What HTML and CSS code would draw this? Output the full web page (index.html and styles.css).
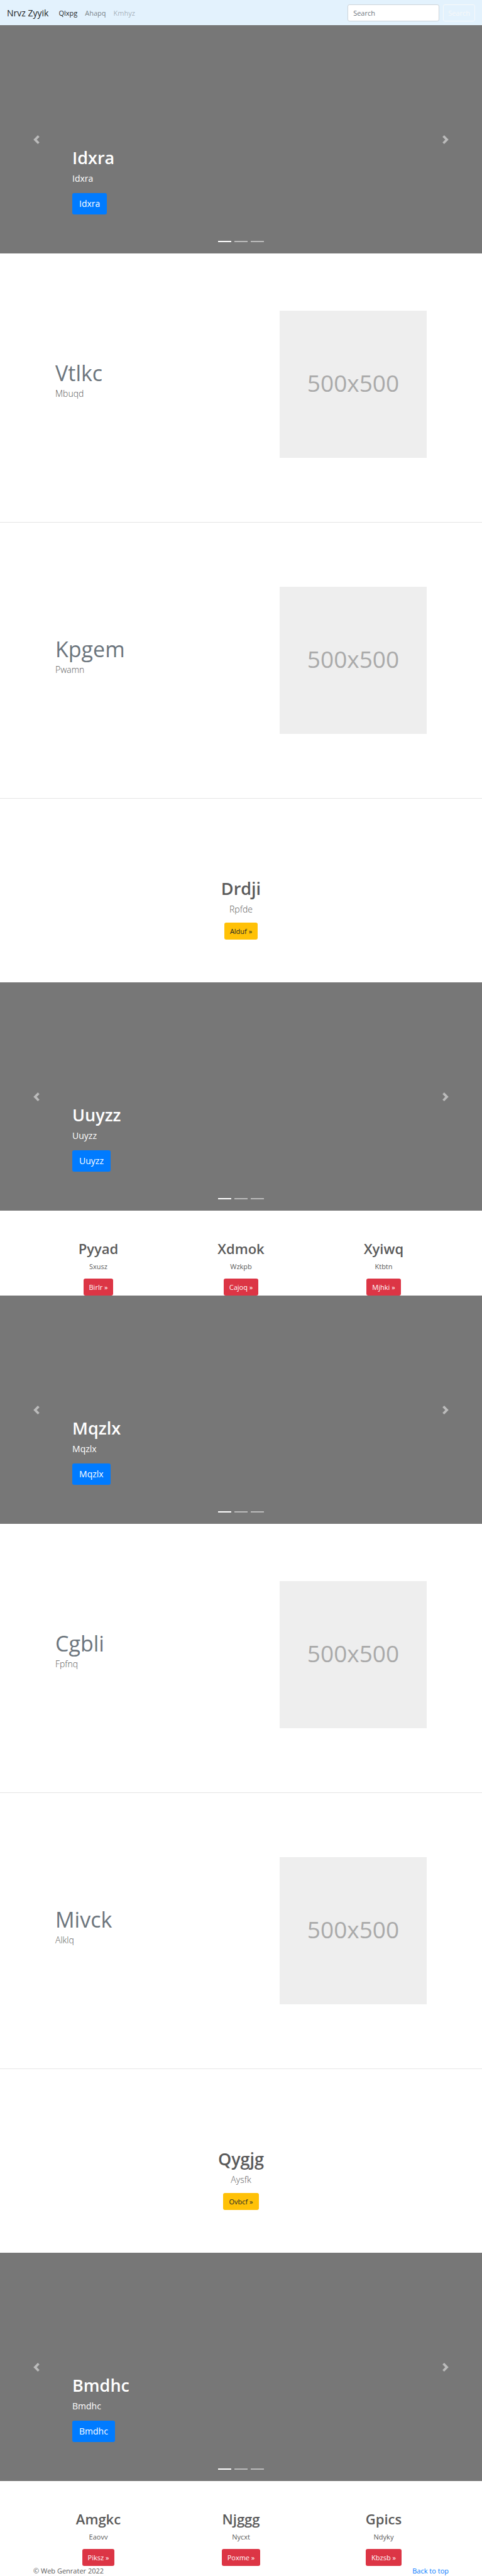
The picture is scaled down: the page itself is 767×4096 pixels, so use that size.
FILE: index.html
```html
<!DOCTYPE html>
<html lang="en">
<head>
<meta charset="utf-8">
<meta name="viewport" content="width=device-width, initial-scale=1">
<title>Nrvz Zyyik</title>
<link rel="stylesheet" href="styles.css">
</head>
<body>
<svg class="defs" aria-hidden="true">
  <symbol id="prev" viewBox="0 0 8 8"><path d="M5.25 0l-4 4 4 4 1.5-1.5L4.25 4l2.5-2.5L5.25 0z"/></symbol>
  <symbol id="next" viewBox="0 0 8 8"><path d="M2.75 0l-1.5 1.5L3.75 4l-2.5 2.5L2.75 8l4-4-4-4z"/></symbol>
</svg>

<header class="navbar" id="top">
  <a class="brand" href="#">Nrvz Zyyik</a>
  <nav class="nav">
    <a class="nav-link active" href="#">Qlxpg</a>
    <a class="nav-link" href="#">Ahapq</a>
    <a class="nav-link disabled" href="#">Kmhyz</a>
  </nav>
  <form class="search">
    <input class="search-input" type="search" placeholder="Search" aria-label="Search">
    <button class="btn btn-outline" type="button">Search</button>
  </form>
</header>

<main>
  <section class="carousel">
    <div class="caption">
      <h1 class="title">Idxra</h1>
      <p class="text">Idxra</p>
      <a class="btn btn-lg btn-primary" href="#">Idxra</a>
    </div>
    <button class="control prev" type="button" aria-label="Previous"><svg class="arrow"><use href="#prev"/></svg></button>
    <button class="control next" type="button" aria-label="Next"><svg class="arrow"><use href="#next"/></svg></button>
    <div class="indicators"><span class="bar on"></span><span class="bar"></span><span class="bar"></span></div>
  </section>

  <section class="featurette first">
    <div class="featurette-text">
      <h2 class="display">Vtlkc</h2>
      <p class="lead">Mbuqd</p>
    </div>
    <div class="placeholder">500x500</div>
  </section>
  <hr class="divider">
  <section class="featurette">
    <div class="featurette-text">
      <h2 class="display">Kpgem</h2>
      <p class="lead">Pwamn</p>
    </div>
    <div class="placeholder">500x500</div>
  </section>
  <hr class="divider">

  <section class="banner">
    <h1 class="title">Drdji</h1>
    <p class="lead large">Rpfde</p>
    <a class="btn btn-warning" href="#">Alduf »</a>
  </section>

  <section class="carousel">
    <div class="caption">
      <h1 class="title">Uuyzz</h1>
      <p class="text">Uuyzz</p>
      <a class="btn btn-lg btn-primary" href="#">Uuyzz</a>
    </div>
    <button class="control prev" type="button" aria-label="Previous"><svg class="arrow"><use href="#prev"/></svg></button>
    <button class="control next" type="button" aria-label="Next"><svg class="arrow"><use href="#next"/></svg></button>
    <div class="indicators"><span class="bar on"></span><span class="bar"></span><span class="bar"></span></div>
  </section>

  <section class="columns">
    <div class="column"><h2 class="subtitle">Pyyad</h2><p class="note">Sxusz</p><a class="btn btn-danger" href="#">Birlr »</a></div>
    <div class="column"><h2 class="subtitle">Xdmok</h2><p class="note">Wzkpb</p><a class="btn btn-danger" href="#">Cajoq »</a></div>
    <div class="column"><h2 class="subtitle">Xyiwq</h2><p class="note">Ktbtn</p><a class="btn btn-danger" href="#">Mjhki »</a></div>
  </section>

  <section class="carousel">
    <div class="caption">
      <h1 class="title">Mqzlx</h1>
      <p class="text">Mqzlx</p>
      <a class="btn btn-lg btn-primary" href="#">Mqzlx</a>
    </div>
    <button class="control prev" type="button" aria-label="Previous"><svg class="arrow"><use href="#prev"/></svg></button>
    <button class="control next" type="button" aria-label="Next"><svg class="arrow"><use href="#next"/></svg></button>
    <div class="indicators"><span class="bar on"></span><span class="bar"></span><span class="bar"></span></div>
  </section>

  <section class="featurette first">
    <div class="featurette-text">
      <h2 class="display">Cgbli</h2>
      <p class="lead">Fpfnq</p>
    </div>
    <div class="placeholder">500x500</div>
  </section>
  <hr class="divider">
  <section class="featurette">
    <div class="featurette-text">
      <h2 class="display">Mivck</h2>
      <p class="lead">Alklq</p>
    </div>
    <div class="placeholder">500x500</div>
  </section>
  <hr class="divider">

  <section class="banner">
    <h1 class="title">Qygjg</h1>
    <p class="lead large">Aysfk</p>
    <a class="btn btn-warning" href="#">Ovbcf »</a>
  </section>

  <section class="carousel">
    <div class="caption">
      <h1 class="title">Bmdhc</h1>
      <p class="text">Bmdhc</p>
      <a class="btn btn-lg btn-primary" href="#">Bmdhc</a>
    </div>
    <button class="control prev" type="button" aria-label="Previous"><svg class="arrow"><use href="#prev"/></svg></button>
    <button class="control next" type="button" aria-label="Next"><svg class="arrow"><use href="#next"/></svg></button>
    <div class="indicators"><span class="bar on"></span><span class="bar"></span><span class="bar"></span></div>
  </section>

  <section class="columns">
    <div class="column"><h2 class="subtitle">Amgkc</h2><p class="note">Eaovv</p><a class="btn btn-danger" href="#">Piksz »</a></div>
    <div class="column"><h2 class="subtitle">Njggg</h2><p class="note">Nycxt</p><a class="btn btn-danger" href="#">Poxme »</a></div>
    <div class="column"><h2 class="subtitle">Gpics</h2><p class="note">Ndyky</p><a class="btn btn-danger" href="#">Kbzsb »</a></div>
  </section>
</main>

<footer class="footer">
  <span>© Web Genrater 2022</span>
  <a class="footer-link" href="#top">Back to top</a>
</footer>
</body>
</html>
```

FILE: styles.css
```css
* { box-sizing: border-box; }
body {
  margin: 0;
  font-family: "Open Sans", "Noto Sans", sans-serif;
  font-size: 11px;
  line-height: 17px;
  color: #5a5a5a;
  background: #fff;
}
h1, h2, p { margin: 0; }
a { text-decoration: none; }
.defs { display: none; }

/* Navbar */
.navbar {
  display: flex;
  align-items: center;
  min-height: 40px;
  padding: 0 11px;
  background: #e3f2fd;
}
.brand {
  margin-right: 10px;
  font-size: 14px;
  line-height: 21px;
  color: rgba(0, 0, 0, .9);
}
.nav { display: flex; flex: 1; }
.nav-link { padding: 0 6px; color: rgba(0, 0, 0, .5); }
.nav-link.active { color: rgba(0, 0, 0, .9); }
.nav-link.disabled { color: rgba(0, 0, 0, .3); }
.search { display: flex; gap: 6px; }
.search-input {
  width: 146px;
  height: 27px;
  padding: 0 8px;
  border: 1px solid #ced4da;
  border-radius: 3px;
  background: #fff;
  font: inherit;
  color: #495057;
}
.search-input::placeholder { color: #6c757d; opacity: 1; }

/* Buttons */
.btn {
  display: inline-block;
  padding: 4px 8px;
  border: 1px solid transparent;
  border-radius: 3px;
  font-family: inherit;
  font-size: 11px;
  line-height: 17px;
  color: #fff;
}
.btn-lg {
  padding: 6px 10px;
  font-size: 14px;
  line-height: 20px;
}
.btn-outline { padding: 4px 7px; border-color: #f8f9fa; background: transparent; color: #f8f9fa; }
.btn-primary { background: #007bff; }
.btn-warning { background: #ffc107; color: #212529; }
.btn-danger { background: #dc3545; }

/* Headings */
.title { font-size: 27px; line-height: 36px; font-weight: 600; margin-bottom: 4px; }
.display { font-size: 34px; line-height: 44px; font-weight: 400; color: #6c757d; }
.subtitle { font-size: 22px; line-height: 28px; font-weight: 600; margin-bottom: 6px; }
.lead { font-size: 14px; line-height: 21px; font-weight: 300; }

/* Carousel */
.carousel {
  position: relative;
  display: flex;
  align-items: flex-end;
  min-height: 363px;
  padding: 0 15% 62px;
  background: #777;
  color: #fff;
}
.caption { display: flex; flex-direction: column; align-items: flex-start; }
.text { font-size: 14px; line-height: 21px; margin-bottom: 13px; }
.control {
  position: absolute;
  top: 0;
  bottom: 0;
  display: flex;
  align-items: center;
  justify-content: center;
  width: 15%;
  padding: 0;
  border: 0;
  background: none;
  color: #fff;
  opacity: .5;
}
.prev { left: 0; }
.next { right: 0; }
.arrow { width: 14px; height: 14px; fill: currentColor; }
.indicators {
  position: absolute;
  right: 0;
  bottom: 18px;
  left: 0;
  display: flex;
  justify-content: center;
  gap: 5px;
}
.bar { width: 21px; height: 2px; background: #fff; opacity: .5; }
.bar.on { opacity: 1; }

/* Featurettes */
.featurette {
  display: flex;
  align-items: center;
  justify-content: space-between;
  padding: 102px 88px;
}
.featurette.first { padding-top: 91px; }
.featurette-text { padding-bottom: 15px; }
.placeholder {
  display: flex;
  align-items: center;
  justify-content: center;
  width: 234px;
  aspect-ratio: 1;
  padding-bottom: 4px;
  background: #eee;
  color: #aaa;
  font-size: 37px;
  line-height: 50px;
}
.divider { margin: 0; border: 0; border-top: 1px solid rgba(0, 0, 0, .1); }

/* Banner */
.banner {
  display: flex;
  flex-direction: column;
  align-items: center;
  padding: 125px 16px 68px;
}
.banner .lead { margin-bottom: 11px; }

/* Three columns */
.columns {
  display: grid;
  grid-template-columns: repeat(3, 1fr);
  padding: 46px 43px 0;
}
.column { display: flex; flex-direction: column; align-items: center; }
.note { margin-bottom: 11px; }

/* Footer */
.footer {
  display: flex;
  justify-content: space-between;
  padding: 0 53px;
  line-height: 16px;
}
.footer-link { color: #007bff; }
```
